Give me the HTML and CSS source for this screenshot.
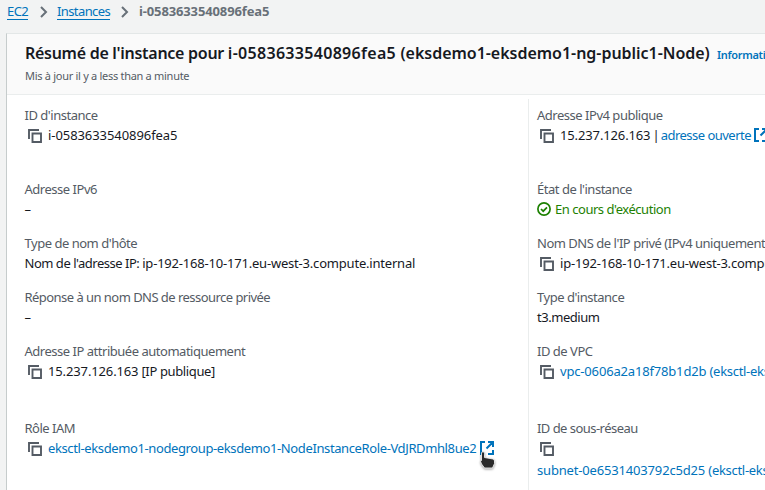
FILE: index.html
```
<!DOCTYPE html>
<html lang="fr">
<head>
<meta charset="utf-8">
<title>EC2 – Instance</title>
<link rel="stylesheet" href="styles.css">
</head>
<body>
<svg class="defs" width="0" height="0">
  <symbol id="copy" viewBox="0 0 16 16"><path d="M2 11V2h10M5.500 5.500h8.500v8.500H5.500z" fill="none" stroke="currentColor" stroke-width="1.900"/></symbol>
  <symbol id="external" viewBox="0 0 14 14"><path d="M5 1H1v12h4M8 13h5v-4M8 1h5v5M13 1L6.500 7.500" fill="none" stroke="currentColor" stroke-width="2"/></symbol>
  <symbol id="chevron" viewBox="0 0 8 12"><path d="M1 1l5 5-5 5" fill="none" stroke="currentColor" stroke-width="2"/></symbol>
  <symbol id="check" viewBox="0 0 14 14"><circle cx="7" cy="7" r="6.100" fill="none" stroke="currentColor" stroke-width="1.700"/><path d="M4 7l2.200 2.200L10 5.300" fill="none" stroke="currentColor" stroke-width="1.700"/></symbol>
</svg>
<nav class="crumbs">
  <a class="crumb c1">EC2</a><svg class="chevron"><use href="#chevron"/></svg>
  <a class="crumb c2">Instances</a><svg class="chevron"><use href="#chevron"/></svg>
  <span class="current">i-0583633540896fea5</span>
</nav>
<main class="panel">
  <header class="head">
    <div class="headline"><h1><span class="title-text">Résumé de l'instance pour </span><span class="title-id">i-0583633540896fea5 </span><span class="title-name">(eksdemo1-eksdemo1-ng-public1-Node)</span></h1><a class="info">Informations</a></div>
    <p class="updated">Mis à jour il y a less than a minute</p>
  </header>
  <div class="columns">
    <section class="column">
      <div class="field"><div class="label">ID d'instance</div><div class="value"><svg class="copy"><use href="#copy"/></svg><span class="v1">i-0583633540896fea5</span></div></div>
      <div class="field"><div class="label">Adresse IPv6</div><div class="value">–</div></div>
      <div class="field"><div class="label">Type de nom d'hôte</div><div class="value"><span class="v2">Nom de l'adresse IP: </span><span class="v2b">ip-192-168-10-171.eu-west-3.compute.internal</span></div></div>
      <div class="field"><div class="label tight">Réponse à un nom DNS de ressource privée</div><div class="value">–</div></div>
      <div class="field"><div class="label">Adresse IP attribuée automatiquement</div><div class="value"><svg class="copy"><use href="#copy"/></svg><span class="v5">15.237.126.163</span><span class="v3"> [IP publique]</span></div></div>
      <div class="field"><div class="label">Rôle IAM</div><div class="value link"><svg class="copy"><use href="#copy"/></svg><a class="v4">eksctl-eksdemo1-nodegroup-eksdemo1-NodeInstanceRole-VdJRDmhl8ue2</a><span class="pointed"><svg class="external"><use href="#external"/></svg><svg class="pointer" viewBox="0 0 16 18"><path d="M1.500 1.500Q3 0 4.500 1.500V6.500l8.500 1.500q1.500.5 1.500 2V12.500L12.500 17H4.500L1.500 13 .6 10.500Q.6 9.500 1.500 9.500z" fill="#2b2b2b" stroke="#fff" stroke-width=".8"/></svg></span></div></div>
    </section>
    <section class="column right">
      <div class="field"><div class="label">Adresse IPv4 publique</div><div class="value"><svg class="copy"><use href="#copy"/></svg><span class="v5">15.237.126.163</span><span class="bar"> | </span><a class="link v6">adresse ouverte</a><svg class="external near link"><use href="#external"/></svg></div></div>
      <div class="field"><div class="label">État de l'instance</div><div class="value ok"><svg class="check"><use href="#check"/></svg><span class="v7">En cours d'exécution</span></div></div>
      <div class="field"><div class="label">Nom DNS de l'IP privé (IPv4 uniquement)</div><div class="value"><svg class="copy"><use href="#copy"/></svg><span class="v2b">ip-192-168-10-171.eu-west-3.compute.internal</span></div></div>
      <div class="field"><div class="label">Type d'instance</div><div class="value"><span class="v7">t3.medium</span></div></div>
      <div class="field"><div class="label">ID de VPC</div><div class="value link"><svg class="copy"><use href="#copy"/></svg><a class="id">vpc-0606a2a18f78b1d2b <span class="v8">(eksctl-eksdemo1-cluster/VPC)</span></a></div></div>
      <div class="field"><div class="label tight">ID de sous-réseau</div><div class="value"><svg class="copy"><use href="#copy"/></svg></div><div class="value link subnet"><a class="id">subnet-0e6531403792c5d25 <span class="v8">(eksctl-eksdemo1-cluster)</span></a></div></div>
    </section>
  </div>
</main>
</body>
</html>
```
FILE: styles.css
```
* { box-sizing: border-box; }
body { margin: 0; width: 765px; height: 490px; overflow: hidden; background: #f2f3f3; color: #16191f; font: 13px/20px "Noto Sans", sans-serif; }
svg { flex: none; }
.defs { position: absolute; }
.crumbs { height: 33px; padding: 2px 0 0 7px; display: flex; align-items: flex-start; white-space: nowrap; }
.crumb { height: 18px; line-height: 19px; color: #0073bb; border-bottom: 1px solid #0073bb; letter-spacing: -.6px; }
.c1 { width: 21px; }
.c2 { width: 53px; }
.chevron { width: 8px; height: 12px; margin: 4px 9px 0 12px; color: #687078; }
.c2 + .chevron { margin-left: 11px; }
.chevron + .current { margin-left: 1px; }
.current { font-weight: 700; color: #687078; letter-spacing: -.13px; line-height: 19px; }
.panel { margin-left: 6px; height: 457px; background: #fff; border-left: 1px solid #c6cccc; border-top: 1px solid #e3e7e7; white-space: nowrap; overflow: hidden; }
.head { height: 61px; padding: 7px 0 0 18px; background: #fafafa; border-bottom: 1px solid #eaeded; }
.headline { display: flex; height: 24px; }
h1 { margin: 0; width: 685px; flex: none; font-size: 16px; line-height: 24px; font-weight: 600; }
.title-text { letter-spacing: -.28px; }
.title-id { letter-spacing: .3px; }
.title-name { letter-spacing: -.03px; }
.info { margin-left: 7px; line-height: 27px; font-size: 11px; font-weight: 600; color: #0073bb; letter-spacing: -.3px; }
.updated { margin: 1px 0 0; font-size: 11px; line-height: 20px; color: #545b64; letter-spacing: -.29px; }
.columns { display: grid; grid-template-columns: 521px 1fr; padding-top: 4px; }
.column { display: grid; grid-template-rows: 74px 54px 54px 54px 77px 80px; padding: 6px 0 0 17.5px; min-width: 0; }
.right { border-left: 1px solid #eaeded; padding-left: 8px; }
.label { height: 20px; color: #545b64; letter-spacing: -.48px; }
.tight { letter-spacing: -.54px; }
.value { height: 20px; display: flex; align-items: center; white-space: pre; }
.subnet { margin-top: 2px; }
.link { color: #0073bb; }
.ok { color: #1d8102; }
.copy { width: 16px; height: 16px; margin: 1px 5px 0 2.5px; color: #545b64; }
.right .copy { margin: 1px 5px 0 2px; }
.external { width: 14px; height: 14px; margin-left: 4px; }
.near { margin-left: 3px; }
.check { width: 14px; height: 14px; margin-right: 4px; }
.v1 { letter-spacing: -.07px; }
.v2 { letter-spacing: -.48px; }
.v2b { letter-spacing: -.2px; }
.v3 { letter-spacing: -.37px; }
.v4 { letter-spacing: -.385px; }
.v5 { letter-spacing: -.13px; }
.bar { letter-spacing: -1.2px; }
.v6 { letter-spacing: -.53px; }
.v7 { letter-spacing: -.47px; }
.v8 { letter-spacing: -.3px; }
.id { letter-spacing: -.17px; }
.pointed { position: relative; display: flex; }
.pointer { position: absolute; left: 4px; top: 10px; width: 16px; height: 18px; filter: drop-shadow(0 1px 1px #0006); }
```
